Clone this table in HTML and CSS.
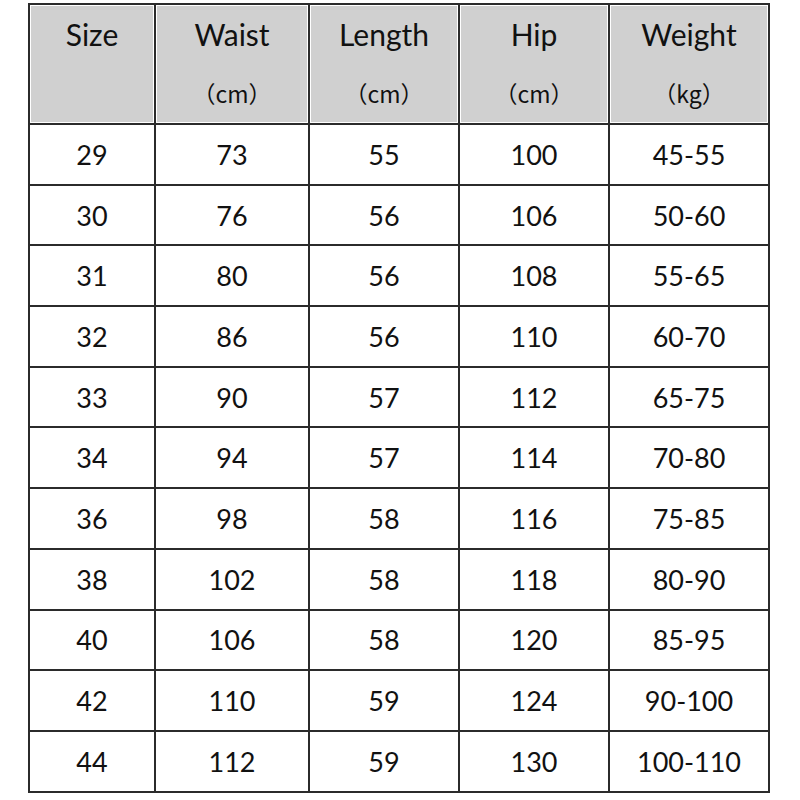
FILE: index.html
```html
<!DOCTYPE html>
<html>
<head>
<meta charset="utf-8">
<link rel="stylesheet" href="styles.css">
</head>
<body>
<table class="size-table">
  <colgroup>
    <col class="c1"><col class="c2"><col class="c3"><col class="c4"><col class="c5">
  </colgroup>
  <thead>
    <tr class="head-row">
      <th><span class="h-main">Size</span></th>
      <th><span class="h-main">Waist</span><span class="h-unit">（cm）</span></th>
      <th><span class="h-main">Length</span><span class="h-unit">（cm）</span></th>
      <th><span class="h-main">Hip</span><span class="h-unit">（cm）</span></th>
      <th><span class="h-main">Weight</span><span class="h-unit">（kg）</span></th>
    </tr>
  </thead>
  <tbody>
    <tr><td>29</td><td>73</td><td>55</td><td>100</td><td>45-55</td></tr>
    <tr><td>30</td><td>76</td><td>56</td><td>106</td><td>50-60</td></tr>
    <tr><td>31</td><td>80</td><td>56</td><td>108</td><td>55-65</td></tr>
    <tr><td>32</td><td>86</td><td>56</td><td>110</td><td>60-70</td></tr>
    <tr><td>33</td><td>90</td><td>57</td><td>112</td><td>65-75</td></tr>
    <tr><td>34</td><td>94</td><td>57</td><td>114</td><td>70-80</td></tr>
    <tr><td>36</td><td>98</td><td>58</td><td>116</td><td>75-85</td></tr>
    <tr><td>38</td><td>102</td><td>58</td><td>118</td><td>80-90</td></tr>
    <tr><td>40</td><td>106</td><td>58</td><td>120</td><td>85-95</td></tr>
    <tr><td>42</td><td>110</td><td>59</td><td>124</td><td>90-100</td></tr>
    <tr><td>44</td><td>112</td><td>59</td><td>130</td><td>100-110</td></tr>
  </tbody>
</table>
</body>
</html>
```
FILE: styles.css
```css
html, body {
  margin: 0;
  padding: 0;
  background: #ffffff;
}
body {
  padding: 3px 0 0 28px;
  font-family: "Lato", "Noto Sans CJK SC", sans-serif;
  color: #111111;
}
.size-table {
  border-collapse: separate;
  border-spacing: 0;
  table-layout: fixed;
  width: 742px;
  border-top: 2px solid #2b2b2b;
  border-left: 2px solid #2b2b2b;
}
.c1 { width: 126px; }
.c2 { width: 154px; }
.c3 { width: 150px; }
.c4 { width: 150px; }
.c5 { width: 160px; }
.size-table th,
.size-table td {
  border-right: 2px solid #2b2b2b;
  border-bottom: 2px solid #2b2b2b;
  padding: 0;
  text-align: center;
}
.head-row th {
  height: 117px;
  vertical-align: top;
  background: #d0d0d0;
  box-shadow: inset 0 0 0 1px #ffffff;
  font-weight: normal;
}
.h-main {
  display: block;
  font-size: 30px;
  line-height: 58px;
}
.h-unit {
  display: block;
  font-family: "Noto Sans CJK SC", sans-serif;
  font-size: 23px;
  line-height: 60px;
  text-spacing-trim: space-all;
}
.size-table td {
  height: 58.7px;
  font-size: 27px;
  vertical-align: middle;
}
```
